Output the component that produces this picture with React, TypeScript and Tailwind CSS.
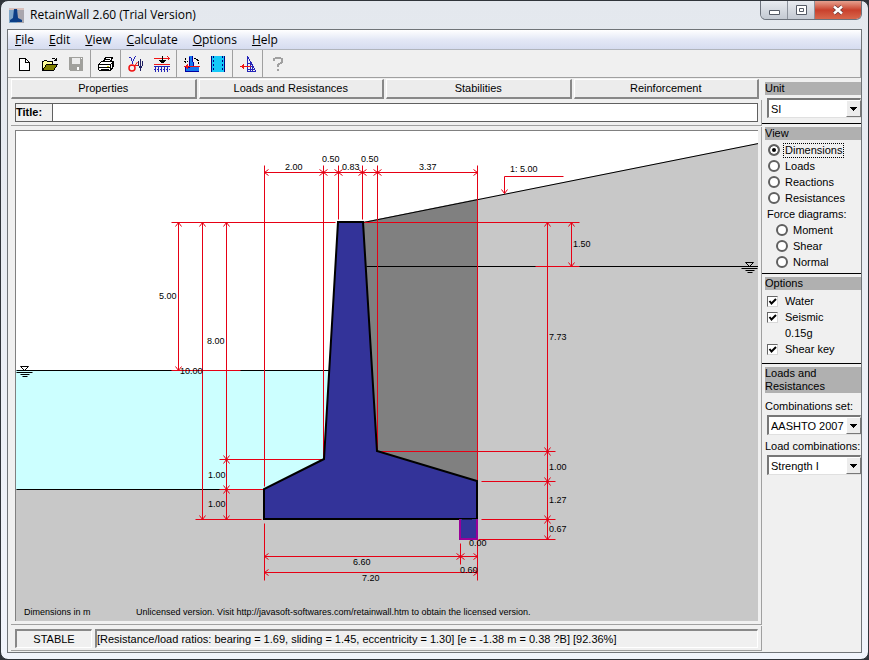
import { useState } from 'react';
import type { ReactNode } from 'react';

const MENUS = ['File', 'Edit', 'View', 'Calculate', 'Options', 'Help'];
const TABS = ['Properties', 'Loads and Resistances', 'Stabilities', 'Reinforcement'];
const VIEWS = ['Dimensions', 'Loads', 'Reactions', 'Resistances'];
const FORCES = ['Moment', 'Shear', 'Normal'];

function Icon({ children }: { children: ReactNode }) {
  return (
    <svg viewBox="0 0 18 18" className="size-[18px]" fill="none" stroke="#000" shapeRendering="crispEdges" aria-hidden="true">
      {children}
    </svg>
  );
}

const NewIcon = (
  <Icon>
    <path d="M4.5 3.5h6l4 4v8h-10z" fill="#fff" />
    <path d="M10.5 3.5v4h4" />
  </Icon>
);

const OpenIcon = (
  <Icon>
    <path d="M1.5 15.5v-9h1l1-1h2l1 1h5v3" fill="#ffff99" />
    <path d="M1.5 15.5l4-6h11l-4 6z" fill="#808000" />
    <path d="M10.5 4.5l1-1h2l2 2M15.5 2.5v3h-3" />
  </Icon>
);

const SaveIcon = (
  <Icon>
    <path d="M2 2h14v14H3l-1-1z" fill="#a0a09c" stroke="none" />
    <path d="M5 3h8v6H5z" fill="#ececec" stroke="none" />
    <path d="M10 12h2v3h-2zM14 3h1v1h-1z" fill="#fff" stroke="none" />
  </Icon>
);

const PrintIcon = (
  <Icon>
    <path d="M6.5 6.5l2-4h7l-2 4" fill="#fff" />
    <path d="M8 4.5h5M7 6.5h6" />
    <path d="M1.5 9.5l3-3h12v5l-3 4h-11l-1-1z" fill="#fff" />
    <path d="M1.5 9.5h12v6M13.5 9.5l3-3M2 12.5h11M4 14.5h8M15.5 8v5" />
    <path d="M10 11h2" stroke="#c8c800" />
  </Icon>
);

const SymbolsIcon = (
  <Icon>
    <path d="M2.5 3v-1h1l2 5 3-6M5.5 7v2" stroke="#2424b8" />
    <path d="M13.5 4v12M11.5 6v4l1 2h2l1-2v-4" stroke="#202060" />
    <g shapeRendering="auto" stroke="#f01414">
      <circle cx="5" cy="13" r="3" strokeWidth="1.500" />
      <path d="M3 10.500h8M8 10.500L10.500 7" />
    </g>
  </Icon>
);

const LoadIcon = (
  <Icon>
    <path d="M1 3.5h16M14.500 1.500l2 2-2 2M1 9.500h16" stroke="#f01414" />
    <path d="M9.5 1v7M6 5.500h7M7 6.5h5M8 7.500h3" />
    <path d="M2.5 11v6M5.5 11v6M8.5 11v6M11.5 11v6M14.5 11v6M1 11.5h16" stroke="#2424b8" />
    <path d="M1 14.500h16" stroke="#2424b8" strokeDasharray="1 2" />
  </Icon>
);

const OverturnIcon = (
  <Icon>
    <path d="M6 1h4l1 11h5v4H2v-4h4z" fill="#1478f0" stroke="none" />
    <path d="M2.5 15.5v-3h4v-11M9.5 1.5l1 10M2 16.5h14" stroke="#0000a0" />
    <path d="M2.500 8v-5M1 6.5h4M11 3.5h2l2 2 1 3" strokeDasharray="2 1" />
    <path d="M1 11.5h16M4.5 9v5M3.5 10v3" stroke="#f01414" />
  </Icon>
);

const SectionIcon = (
  <Icon>
    <path d="M2 1h14v16H2z" fill="#14c8f8" stroke="none" />
    <path d="M2.5 1v16M15.5 1v16" stroke="#000080" />
    <path d="M4.5 1v16M13.5 1v16" stroke="#000080" strokeDasharray="2 2" />
  </Icon>
);

const PressureIcon = (
  <Icon>
    <path d="M8.5 1v15h8z" stroke="#2424b8" />
    <path d="M11.5 6v10M9 8.5h3M9 11.5h5M9 14.5h6M13.5 11v5" stroke="#2424b8" />
    <path d="M1 11.5h11M4.5 9v5M3.5 10v3M2.5 11v1" stroke="#f01414" />
  </Icon>
);

const HelpIcon = (
  <Icon>
    <path d="M5 6V4l2-1h4l2 1v3L9 10v2M9 14v2" stroke="#a0a0a0" strokeWidth="2" />
  </Icon>
);

const TOOL_GROUPS = [
  [
    { name: 'New', icon: NewIcon },
    { name: 'Open', icon: OpenIcon },
    { name: 'Save', icon: SaveIcon },
  ],
  [{ name: 'Print', icon: PrintIcon }],
  [
    { name: 'Soil parameters', icon: SymbolsIcon },
    { name: 'Surcharge', icon: LoadIcon },
  ],
  [
    { name: 'Stability', icon: OverturnIcon },
    { name: 'Section', icon: SectionIcon },
  ],
  [{ name: 'Pressure', icon: PressureIcon }],
  [{ name: 'Help', icon: HelpIcon }],
];

type Point = [number, number];

// Dimension lines with an open arrow head at both ends
const DIMENSIONS: [Point, Point][] = [
  [[264, 172], [323, 172]],
  [[323, 172], [338, 172]],
  [[338, 172], [362, 172]],
  [[362, 172], [377, 172]],
  [[377, 172], [477, 172]],
  [[178, 222], [178, 370]],
  [[202, 222], [202, 519]],
  [[226, 222], [226, 459]],
  [[226, 459], [226, 489]],
  [[226, 489], [226, 519]],
  [[571, 222], [571, 266]],
  [[547, 222], [547, 451]],
  [[547, 451], [547, 481]],
  [[547, 481], [547, 519]],
  [[547, 519], [547, 539]],
  [[264, 556], [460, 556]],
  [[460, 556], [477, 556]],
  [[264, 572], [477, 572]],
];

const EXTENSIONS =
  'M264 165V486M264 523V580M323 165V459M338 165V219M362 165V219M377 165V451M477 165V481M477 540V580M460 543V564' +
  'M171 222H335M364 222H579M171 370H240M219 459H321M219 489H264M195 519H261' +
  'M535 266H579M379 451H555M481 481H555M481 519H555M478 539H555M563 176H504V193M501 189L504 193L507 189';

const LABELS: { x: number; y: number; text: string }[] = [
  { x: 285, y: 170, text: '2.00' },
  { x: 322, y: 162, text: '0.50' },
  { x: 342, y: 170, text: '0.83' },
  { x: 361, y: 162, text: '0.50' },
  { x: 419, y: 170, text: '3.37' },
  { x: 510, y: 172, text: '1: 5.00' },
  { x: 573, y: 247, text: '1.50' },
  { x: 159, y: 299, text: '5.00' },
  { x: 207, y: 344, text: '8.00' },
  { x: 180, y: 374, text: '10.00' },
  { x: 549, y: 340, text: '7.73' },
  { x: 208, y: 478, text: '1.00' },
  { x: 208, y: 507, text: '1.00' },
  { x: 549, y: 470, text: '1.00' },
  { x: 549, y: 503, text: '1.27' },
  { x: 549, y: 532, text: '0.67' },
  { x: 469, y: 546, text: '0.00' },
  { x: 353, y: 565, text: '6.60' },
  { x: 460, y: 573, text: '0.60' },
  { x: 362, y: 581, text: '7.20' },
];

function arrowHead([x, y]: Point, [fromX, fromY]: Point) {
  if (y === fromY) {
    const back = x > fromX ? x - 4 : x + 4;
    return `M${back} ${y - 3}L${x} ${y}L${back} ${y + 3}`;
  }
  const back = y > fromY ? y - 4 : y + 4;
  return `M${x - 3} ${back}L${x} ${y}L${x + 3} ${back}`;
}

function WaterMark({ x, y }: { x: number; y: number }) {
  return (
    <g transform={`translate(${x} ${y})`}>
      <path d="M-4 -4H4L0 0Z" fill="none" />
      <path d="M-8 2H8M-4 4H5M-2 6H3" />
    </g>
  );
}

function WallDrawing() {
  return (
    <svg
      viewBox="16 131 742 490"
      className="block h-auto w-full bg-white"
      role="img"
      aria-label="Retaining wall section with dimensions"
    >
      <path d="M16 489H264V519H477L363 222L758 143V621H16Z" fill="#c8c8c8" />
      <path d="M16 370H329L324 459L264 489H16Z" fill="#ccffff" />
      <path d="M363 222L477 199V481L377 451Z" fill="#808080" />
      {/* strokes sit on pixel centres so that one unit stays one sharp line */}
      <g transform="translate(0.5 0.5)">
        <g stroke="#000">
          <path d="M363 222L758 143M366 266H758M16 370H329M16 489H264" fill="none" />
          <WaterMark x={24} y={370} />
          <WaterMark x={749} y={266} />
        </g>
        <g stroke="#e60014" fill="none">
          <path d={EXTENSIONS} />
          {DIMENSIONS.map(([a, b], i) => (
            <path key={i} d={`M${a[0]} ${a[1]}L${b[0]} ${b[1]}${arrowHead(a, b)}${arrowHead(b, a)}`} />
          ))}
        </g>
      </g>
      <path d="M338 222H363L377 451L477 481V519H264V489L324 459Z" fill="#333399" stroke="#000" strokeWidth="2" />
      <path d="M460 519V539H477V519" fill="#333399" stroke="#990099" strokeWidth="2" />
      <path d="M462 519H472" stroke="#000" />
      <g className="text-[9px]">
        {LABELS.map((label, i) => (
          <text key={i} x={label.x} y={label.y}>
            {label.text}
          </text>
        ))}
        <text x={24} y={615}>Dimensions in m</text>
        <text x={136} y={615}>
          Unlicensed version. Visit http://javasoft-softwares.com/retainwall.htm to obtain the licensed version.
        </text>
      </g>
    </svg>
  );
}

function SideHeading({ children }: { children: ReactNode }) {
  return <h2 className="ml-[3px] bg-[#b0b0b0] leading-[13px]">{children}</h2>;
}

function DropDown({ label, options }: { label: string; options: string[] }) {
  return (
    <div className="relative ml-[5px]">
      <select
        aria-label={label}
        className="block h-5 w-full appearance-none border border-t-2 border-l-2 border-[#e0e0e0] border-t-[#777] border-l-[#777] bg-white pl-[2px] leading-4 outline-none"
      >
        {options.map((o) => (
          <option key={o}>{o}</option>
        ))}
      </select>
      <span className="pointer-events-none absolute top-[2px] right-0 bottom-px flex w-[15px] items-center justify-center border border-white border-r-[#777] border-b-[#777] bg-[#ececec]">
        <svg viewBox="0 0 7 4" className="h-1 w-[7px]" shapeRendering="crispEdges">
          <path d="M0 0h7L3.500 4z" />
        </svg>
      </span>
    </div>
  );
}

interface RadioProps {
  label: string;
  selected: string;
  onSelect: (value: string) => void;
}

function Radio({ label, selected, onSelect }: RadioProps) {
  return (
    <label className="flex h-4 items-center gap-[3px]">
      <input
        type="radio"
        name="view"
        checked={selected === label}
        onChange={() => onSelect(label)}
        className="size-3 shrink-0 appearance-none rounded-full border-2 border-[#606060] bg-white checked:bg-black checked:shadow-[inset_0_0_0_2px_white]"
      />
      <span className={selected === label ? 'border border-dotted border-black px-px leading-[13px]' : 'px-[2px]'}>{label}</span>
    </label>
  );
}

function CheckBox({ label }: { label: string }) {
  return (
    <label className="flex h-4 items-center gap-[7px]">
      <span className="grid size-[11px] shrink-0">
        <input
          type="checkbox"
          defaultChecked
          className="peer col-start-1 row-start-1 size-[11px] appearance-none border border-[#d8d8d8] border-t-[#666] border-l-[#666] bg-white"
        />
        <svg viewBox="0 0 11 11" className="pointer-events-none invisible col-start-1 row-start-1 size-[11px] peer-checked:visible">
          <path d="M2.500 5L4.500 7.500L9 3" fill="none" stroke="#000" strokeWidth="2" />
        </svg>
      </span>
      {label}
    </label>
  );
}

function AppIcon() {
  return (
    <svg viewBox="0 0 15 15" className="size-[15px]" aria-hidden="true">
      <path d="M0 0h15v15H0z" fill="#7fa6c8" />
      <path d="M8 3l7-3v15H8z" fill="#a9a7ad" />
      <path d="M0 0h15v2H0z" fill="#d8c0bc" />
      <path d="M5 1h3l1 9 4 2v2H1v-2l3-2z" fill="#0b3e86" />
    </svg>
  );
}

function SidePanel() {
  const [view, setView] = useState('Dimensions');

  return (
    <aside className="w-[99px] shrink-0 pt-1">
      <SideHeading>Unit</SideHeading>
      <div className="border-b border-black pt-[3px] pb-[5px]">
        <DropDown label="Unit" options={['SI', 'US']} />
      </div>
      <fieldset className="border-b border-black pt-[3px] pb-[3px]">
        <SideHeading>View</SideHeading>
        <div className="pt-[2px] pl-[6px]">
          {VIEWS.map((v) => (
            <Radio key={v} label={v} selected={view} onSelect={setView} />
          ))}
        </div>
        <p className="pl-[5px] leading-4">Force diagrams:</p>
        <div className="pl-[14px]">
          {FORCES.map((f) => (
            <Radio key={f} label={f} selected={view} onSelect={setView} />
          ))}
        </div>
      </fieldset>
      <section className="border-b border-black pt-[3px] pb-[6px]">
        <SideHeading>Options</SideHeading>
        <div className="pt-[3px] pl-[5px]">
          <CheckBox label="Water" />
          <CheckBox label="Seismic" />
          <p className="pl-[18px] leading-4">0.15g</p>
          <CheckBox label="Shear key" />
        </div>
      </section>
      <section className="pt-[3px]">
        <SideHeading>
          Loads and
          <br />
          Resistances
        </SideHeading>
        <p className="mt-1 pl-[3px] leading-[18px] whitespace-nowrap">Combinations set:</p>
        <DropDown label="Combinations set" options={['AASHTO 2007']} />
        <p className="mt-[2px] pl-[3px] leading-[18px] whitespace-nowrap">Load combinations:</p>
        <DropDown label="Load combinations" options={['Strength I']} />
      </section>
    </aside>
  );
}

export default function App() {
  const [title, setTitle] = useState('');

  return (
    <div className="flex min-h-screen flex-col bg-[#30343a] font-['Liberation_Sans',Arial,sans-serif] text-[11px] text-black">
      <div className="flex flex-1 flex-col rounded-lg border border-[#30343a] bg-linear-to-b from-[#e4e8ee] to-[#f1f4fb] px-[6px] pb-[6px]">
        <header className="flex h-7 items-center gap-[6px] pl-[2px] font-['Open_Sans','Noto_Sans',sans-serif] text-xs">
          <AppIcon />
          <h1 className="grow">RetainWall 2.60 (Trial Version)</h1>
          <div className="flex h-[19px] self-start overflow-hidden rounded-b-md border border-t-0 border-[#6c727c]">
            <button type="button" aria-label="Minimize" className="flex w-[27px] items-center justify-center border-r border-[#8c929c] bg-linear-to-b from-[#e8ebf0] to-[#c3c9d2]">
              <svg viewBox="0 0 13 12" className="h-3 w-[13px]"><path d="M1.500 6.500h10v4h-10z" fill="#fff" stroke="#555b66" /></svg>
            </button>
            <button type="button" aria-label="Maximize" className="flex w-[27px] items-center justify-center border-r border-[#8c929c] bg-linear-to-b from-[#e8ebf0] to-[#c3c9d2]">
              <svg viewBox="0 0 13 10" className="h-[10px] w-[13px]"><path d="M1.500 .5h10v9h-10zM4.500 3.500h4v3h-4z" fill="#fff" stroke="#555b66" /></svg>
            </button>
            <button type="button" aria-label="Close" className="flex w-[46px] items-center justify-center bg-linear-to-b from-[#e5a08f] via-[#c9402c] to-[#d8674c]">
              <svg viewBox="0 0 12 10" className="h-[10px] w-3">
                <path d="M2 1.500l8 7M10 1.500l-8 7" stroke="#6a3a3a" strokeWidth="4" />
                <path d="M2 1.500l8 7M10 1.500l-8 7" stroke="#fff" strokeWidth="2.500" />
              </svg>
            </button>
          </div>
        </header>

        <div className="flex flex-1 flex-col border border-[#707478] bg-[#f0f0f0]">
          <nav className="flex h-5 items-center gap-[15px] border-b border-[#b0b4bc] bg-linear-to-b from-white via-[#e4e8f6] to-[#d6dcf0] pt-px pl-[7px] font-['Open_Sans','Noto_Sans',sans-serif] text-xs leading-[18px]">
            {MENUS.map((m) => (
              <button key={m} type="button">
                <span className="underline">{m[0]}</span>
                {m.slice(1)}
              </button>
            ))}
          </nav>

          <div className="flex h-7 items-stretch border-r border-b border-[#a0a0a0] pl-[3px]">
            {TOOL_GROUPS.map((group, i) => (
              <div key={i} className="mr-px flex border-r border-[#a0a0a0] pr-px pl-px first:pl-0 last:border-r-0">
                {group.map((tool) => (
                  <button key={tool.name} type="button" aria-label={tool.name} className="flex w-[26px] items-center justify-center">
                    {tool.icon}
                  </button>
                ))}
              </div>
            ))}
          </div>

          <div className="flex flex-1">
            <main className="flex min-w-0 flex-1 flex-col">
              <div className="flex gap-[2px] pt-px pr-[3px] pl-[3px]">
                {TABS.map((tab) => (
                  <button key={tab} type="button" className="h-5 flex-1 border border-r-2 border-b-2 border-white border-r-[#888] border-b-[#888] bg-[#ececec]">
                    {tab}
                  </button>
                ))}
              </div>

              <div className="mt-px ml-[3px] border-r border-b border-[#a0a0a0] py-[3px] pr-[3px] pl-[4px]">
                <div className="flex h-[19px] border border-[#606060]">
                  <label htmlFor="title" className="w-[36px] font-bold">Title:</label>
                  <input
                    id="title"
                    value={title}
                    onChange={(e) => setTitle(e.target.value)}
                    className="min-w-0 flex-1 border-l border-[#606060] bg-white px-1 outline-none"
                  />
                </div>
              </div>

              <div className="mt-px ml-[3px] border-r border-b border-[#a0a0a0] pt-[3px] pr-[3px] pb-[3px] pl-[4px]">
                <div className="border-t border-l border-[#808080]">
                  <WallDrawing />
                </div>
              </div>

              <div className="mt-px ml-[3px] flex gap-[3px] border-r border-b border-[#a0a0a0] pt-[3px] pr-[3px] pb-[2px] pl-[4px]">
                <output className="h-[19px] w-[77px] border border-t-2 border-l-2 border-white border-t-[#888] border-l-[#888] text-center leading-4">
                  STABLE
                </output>
                <output className="h-[19px] min-w-0 flex-1 border border-t-2 border-l-2 border-white border-t-[#888] border-l-[#888] leading-4">
                  [Resistance/load ratios: bearing = 1.69, sliding = 1.45, eccentricity = 1.30] [e = -1.38 m = 0.38 ?B] [92.36%]
                </output>
              </div>
            </main>
            <SidePanel />
          </div>
        </div>
      </div>
    </div>
  );
}
